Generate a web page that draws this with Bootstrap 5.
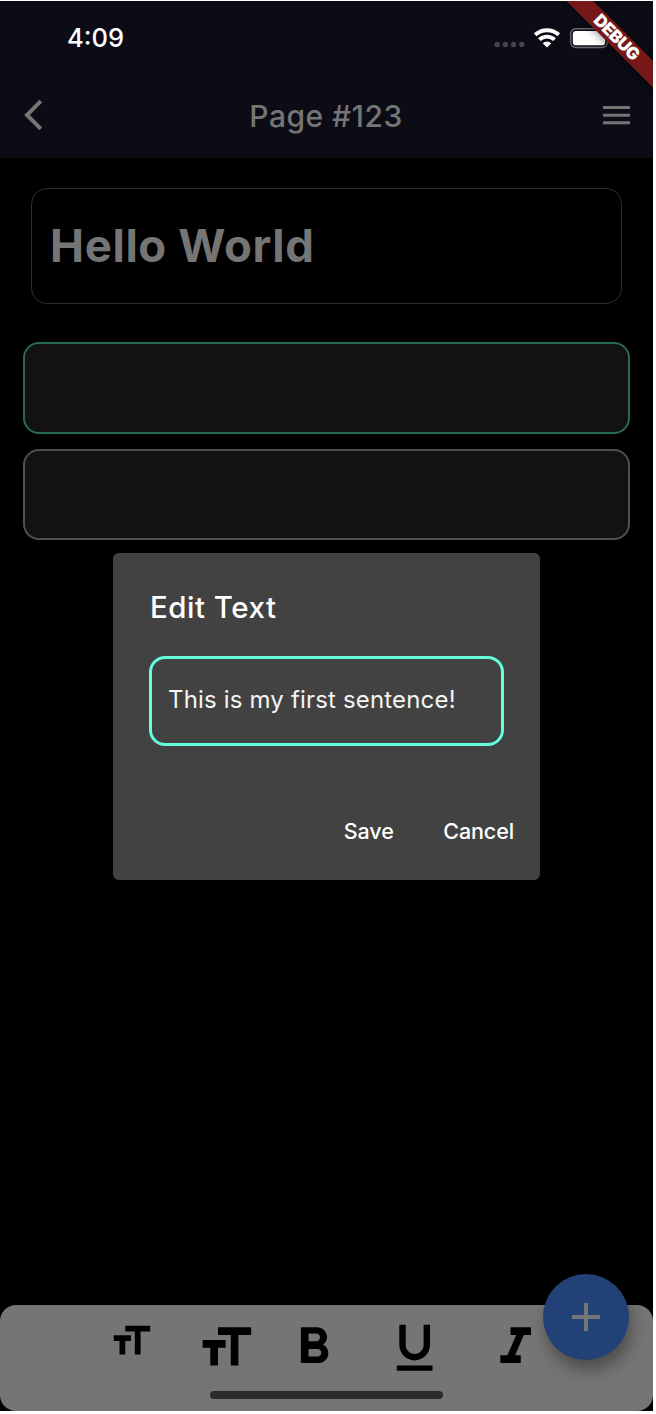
<!DOCTYPE html>
<html lang="en">
<head>
<meta charset="utf-8">
<meta name="viewport" content="width=device-width, initial-scale=1">
<title>Page #123</title>
<link rel="stylesheet" href="https://cdn.jsdelivr.net/npm/bootstrap@5.3.0/dist/css/bootstrap.min.css">
<style>
body { background: #fff; font-family: Inter, "Liberation Sans", sans-serif; overflow: hidden; }
.phone { width: 653px; height: 1410px; margin-top: 1px; background: #000; }
.topbar { height: 157px; background: #0c0c16; }
.statusbar { height: 74px; padding: 0 44px 0 67px; }
.clock { font-size: 25.5px; font-weight: 500; color: #fff; line-height: 1; }
.appbar { height: 83px; padding: 0 23px 3px 22px; color: #757575; }
.apptitle { font-size: 30px; font-weight: 500; line-height: 1; letter-spacing: .45px; padding: 2px 0 0 3px; }
.ribbon-clip { width: 110px; height: 110px; pointer-events: none; }
.ribbon { left: -4.2px; top: 27.2px; width: 155px; height: 18.6px; background: #761718; color: #fff; transform: rotate(45deg); box-shadow: 0 0 10px rgba(0,0,0,.55); font-size: 17px; font-weight: 900; line-height: 18.6px; letter-spacing: -.5px; }
.content { padding: 30px 23px 0; }
.headline { height: 116px; margin: 0 8px 38px; border: 1.5px solid #2f2f2f; border-radius: 16px; padding: 0 18px; font-size: 45.5px; font-weight: 700; color: #757575; line-height: 1; letter-spacing: .65px; }
.block { height: 91.5px; margin-bottom: 15px; border: 2px solid #505050; border-radius: 16px; background: #121212; }
.block.active { border-color: #27685a; }
.dialog-box { left: 113px; top: 552px; width: 427px; height: 327px; background: #424242; border-radius: 6px; padding: 39px 26px 0 36px; color: #fff; }
.dialog-title { font-size: 29.5px; font-weight: 500; line-height: 30px; letter-spacing: .5px; padding-left: 1px; }
.entry { width: 355px; height: 90px; margin-top: 34px; border: 3px solid #64ffda; border-radius: 16px; padding: 0 16px 3px; font-size: 24px; line-height: 1; letter-spacing: .17px; color: #f4f4f4; }
.actions { margin-top: 69px; gap: 49.5px; }
.actions button { font-size: 21.5px; font-weight: 500; line-height: 32px; color: #fff; background: none; border: 0; padding: 0; letter-spacing: -.1px; }
.toolbar { height: 106.5px; background: #757575; border-radius: 16px; padding: 12.5px 0 0 108.3px; }
.tool { width: 61.3px; height: 61.3px; flex: none; }
.tool.compact { width: 46px; height: 46px; margin: 1.3px 41px 0 0; }
.home { width: 233px; height: 8px; border-radius: 4px; background: #2b2b2b; margin: 13px 0 0 102px; }
.fab { left: 543px; top: 1273px; width: 86px; height: 86px; background: #214177; border: 0; padding: 0; box-shadow: 3px 10px 16px rgba(0,0,0,.35); }
svg { display: block; }
</style>
</head>
<body>
<main class="phone position-relative overflow-hidden d-flex flex-column">
  <header class="topbar">
    <div class="statusbar d-flex align-items-center">
      <span class="clock">4:09</span>
      <svg class="ms-auto" width="116" height="24" viewBox="493 26 116 24">
        <g fill="#454549"><circle cx="497.2" cy="44.5" r="2.7"/><circle cx="505.4" cy="44.5" r="2.7"/><circle cx="513.5" cy="44.5" r="2.7"/><circle cx="521.8" cy="44.5" r="2.7"/></g>
        <g fill="none" stroke="#fff" stroke-width="3.9"><path d="M535.2 34.8a17.4 17.4 0 0 1 23.6 0"/><path d="M539.4 39.7a10.9 10.9 0 0 1 15.2 0"/></g>
        <path d="M547 47.5l-4.3-4.3a6.4 6.4 0 0 1 8.6 0z" fill="#fff"/>
        <rect x="570.6" y="28.7" width="36.8" height="18.8" rx="5.5" fill="none" stroke="#69696f" stroke-width="1.4"/>
        <rect x="572.8" y="30.9" width="32.4" height="14.4" rx="3.4" fill="#fff"/>
      </svg>
    </div>
    <div class="appbar d-flex align-items-center justify-content-between">
      <svg width="24" height="32" viewBox="0 0 24 32" fill="none" stroke="#757575" stroke-width="4"><path d="M18.8 2.2L5 16l13.8 13.8"/></svg>
      <span class="apptitle">Page #123</span>
      <svg width="27" height="20" viewBox="0 0 27 20" fill="#757575"><path d="M0 1h27v3H0zM0 8.7h27v3H0zM0 16.2h27v3H0z"/></svg>
    </div>
  </header>

  <section class="content flex-grow-1">
    <div class="headline d-flex align-items-center">Hello World</div>
    <div class="block active"></div>
    <div class="block"></div>
  </section>

  <footer class="toolbar">
    <div class="d-flex">
      <svg class="tool compact" viewBox="0 0 24 24"><path d="M9 4v3h5v12h3V7h5V4H9zm-6 8h3v7h3v-7h3V9H3v3z"/></svg>
      <svg class="tool" viewBox="0 0 24 24"><path d="M9 4v3h5v12h3V7h5V4H9zm-6 8h3v7h3v-7h3V9H3v3z"/></svg>
      <svg class="tool" style="margin-left:26.8px" viewBox="0 0 24 24"><path d="M15.6 10.79c.97-.67 1.65-1.77 1.65-2.79 0-2.26-1.75-4-4-4H7v14h7.04c2.09 0 3.71-1.7 3.71-3.79 0-1.52-.86-2.82-2.15-3.42zM10 6.5h3c.83 0 1.5.67 1.5 1.5s-.67 1.5-1.5 1.5h-3v-3zm3.5 9H10v-3h3.5c.83 0 1.5.67 1.5 1.5s-.67 1.5-1.5 1.5z"/></svg>
      <svg class="tool" style="margin-left:39.5px" viewBox="0 0 24 24"><path d="M12 17c3.31 0 6-2.69 6-6V3h-2.5v8c0 1.93-1.57 3.5-3.5 3.5S8.5 12.93 8.5 11V3H6v8c0 3.31 2.69 6 6 6zm-7 2v2h14v-2H5z"/></svg>
      <svg class="tool" style="margin-left:39.5px" viewBox="0 0 24 24"><path d="M10 4v3h2.21l-3.42 8H6v3h8v-3h-2.21l3.42-8H18V4z"/></svg>
    </div>
    <div class="home"></div>
  </footer>

  <button class="fab position-absolute rounded-circle d-flex align-items-center justify-content-center" aria-label="Add">
    <svg width="28" height="28" viewBox="0 0 28 28" fill="#757575"><path d="M12 0h4v12h12v4H16v12h-4V16H0v-4h12z"/></svg>
  </button>

  <div class="dialog-box position-absolute" role="dialog">
    <div class="dialog-title">Edit Text</div>
    <div class="entry d-flex align-items-center text-nowrap">This is my first sentence!</div>
    <div class="actions d-flex justify-content-end"><button>Save</button><button>Cancel</button></div>
  </div>

  <div class="ribbon-clip position-absolute top-0 end-0 overflow-hidden"><div class="ribbon position-absolute text-center">DEBUG</div></div>
</main>
<script src="https://cdn.jsdelivr.net/npm/bootstrap@5.3.0/dist/js/bootstrap.bundle.min.js"></script>
</body>
</html>
